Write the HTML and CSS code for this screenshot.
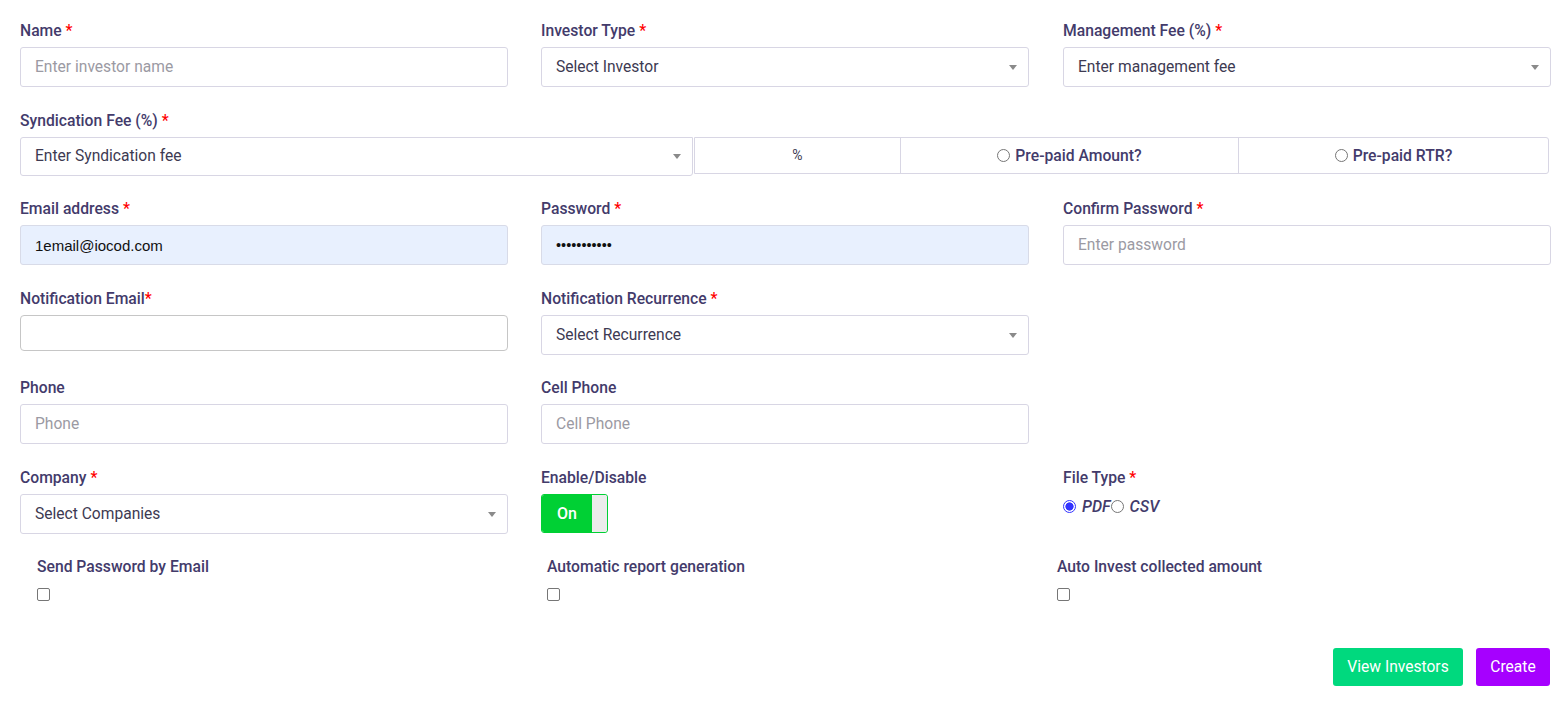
FILE: index.html
```html
<!DOCTYPE html>
<html>
<head>
<meta charset="utf-8">
<link rel="stylesheet" href="styles.css">
</head>
<body>
<form class="page">
  <div class="grid">
    <div class="field">
      <label class="lbl">Name <span class="req">*</span></label>
      <div class="ctl"><span class="ph">Enter investor name</span></div>
    </div>
    <div class="field">
      <label class="lbl">Investor Type <span class="req">*</span></label>
      <div class="ctl sel"><span class="val">Select Investor</span><span class="caret"></span></div>
    </div>
    <div class="field c3">
      <label class="lbl">Management Fee (%) <span class="req">*</span></label>
      <div class="ctl sel"><span class="val">Enter management fee</span><span class="caret"></span></div>
    </div>

    <div class="field span3">
      <label class="lbl">Syndication Fee (%) <span class="req">*</span></label>
      <div class="synd">
        <div class="ctl sel synd-sel"><span class="val">Enter Syndication fee</span><span class="caret"></span></div>
        <div class="group">
          <div class="cell pct">%</div>
          <div class="cell amt"><span class="radio"></span><span class="rtxt">Pre-paid Amount?</span></div>
          <div class="cell rtr"><span class="radio"></span><span class="rtxt">Pre-paid RTR?</span></div>
        </div>
      </div>
    </div>

    <div class="field">
      <label class="lbl">Email address <span class="req">*</span></label>
      <div class="ctl auto"><span class="atxt">1email@iocod.com</span></div>
    </div>
    <div class="field">
      <label class="lbl">Password <span class="req">*</span></label>
      <div class="ctl auto"><span class="dots">•••••••••••</span></div>
    </div>
    <div class="field c3">
      <label class="lbl">Confirm Password <span class="req">*</span></label>
      <div class="ctl"><span class="ph">Enter password</span></div>
    </div>

    <div class="field">
      <label class="lbl">Notification Email<span class="req">*</span></label>
      <div class="ctl plain"></div>
    </div>
    <div class="field">
      <label class="lbl">Notification Recurrence <span class="req">*</span></label>
      <div class="ctl sel"><span class="val">Select Recurrence</span><span class="caret"></span></div>
    </div>
    <div class="field c3"></div>

    <div class="field">
      <label class="lbl">Phone</label>
      <div class="ctl"><span class="ph">Phone</span></div>
    </div>
    <div class="field">
      <label class="lbl">Cell Phone</label>
      <div class="ctl"><span class="ph">Cell Phone</span></div>
    </div>
    <div class="field c3"></div>

    <div class="field">
      <label class="lbl">Company <span class="req">*</span></label>
      <div class="ctl sel"><span class="val">Select Companies</span><span class="caret"></span></div>
    </div>
    <div class="field">
      <label class="lbl">Enable/Disable</label>
      <div class="toggle"><span class="on">On</span><span class="knob"></span></div>
    </div>
    <div class="field c3">
      <label class="lbl">File Type <span class="req">*</span></label>
      <div class="ftype">
        <span class="radio checked"></span><span class="it">PDF</span><span class="radio"></span><span class="it csv">CSV</span>
      </div>
    </div>
  </div>

  <div class="checks">
    <div class="chk"><div class="lbl">Send Password by Email</div><span class="box"></span></div>
    <div class="chk"><div class="lbl">Automatic report generation</div><span class="box"></span></div>
    <div class="chk"><div class="lbl">Auto Invest collected amount</div><span class="box"></span></div>
  </div>

  <div class="actions">
    <button type="button" class="btn green">View Investors</button>
    <button type="button" class="btn purple">Create</button>
  </div>
</form>
</body>
</html>
```

FILE: styles.css
```css
* { box-sizing: border-box; }
body {
  margin: 0;
  background: #fff;
  font-family: Roboto, "Liberation Sans", Arial, sans-serif;
}
.page {
  padding: 20px 13px 0 20px;
}
.grid {
  display: grid;
  grid-template-columns: 488px 488px 489px;
  column-gap: 33px;
  row-gap: 22.6px;
}
.c3 { margin-left: 1px; }
.span3 { grid-column: 1 / 4; }
.field { display: flex; flex-direction: column; }
.lbl {
  display: block;
  font-size: 15.7px;
  font-weight: 500;
  line-height: 22px;
  color: #433b6b;
  margin-bottom: 5px;
  white-space: nowrap;
}
.req { color: #ff0000; }
.ctl {
  position: relative;
  height: 40px;
  border: 1px solid #d8d6e4;
  border-radius: 3px;
  display: flex;
  align-items: center;
  padding: 0 14px;
  font-size: 15.6px;
  background: #fff;
}
.ph { color: #9b9aa3; }
.val { color: #3d3a52; }
.sel { padding-right: 30px; }
.caret {
  position: absolute;
  right: 11px;
  top: 50%;
  margin-top: -2px;
  width: 0; height: 0;
  border-left: 4.5px solid transparent;
  border-right: 4.5px solid transparent;
  border-top: 5px solid #8a8a8a;
}
.auto { background: #e8f0fe; border-color: #d8dbe8; }
.atxt { font-family: "Liberation Sans", Arial, sans-serif; color: #111; font-size: 15px; }
.dots { font-family: "Liberation Sans", Arial, sans-serif; color: #111; font-size: 14.5px; }
.plain { height: 36px; border-color: #c6c6c6; border-radius: 4px; }

.synd { display: flex; align-items: flex-start; }
.synd-sel { width: 673px; height: 39px; border-radius: 3px 0 3px 3px; }
.group {
  display: flex;
  height: 37px;
  border: 1px solid #d8d6e4;
  border-radius: 0 3px 3px 0;
  margin-left: 1px;
  width: 855px;
}
.cell {
  display: flex;
  align-items: center;
  justify-content: center;
  font-size: 15.7px;
  height: 100%;
}
.pct { width: 206px; border-right: 1px solid #d8d6e4; color: #3d3a52; font-size: 14px; }
.amt { width: 338px; border-right: 1px solid #d8d6e4; }
.rtr { flex: 1; }
.rtxt { font-weight: 500; color: #433b6b; }
.radio {
  display: inline-block;
  width: 13px; height: 13px;
  border: 1px solid #767676;
  border-radius: 50%;
  margin-right: 5px;
  background: #fff;
  flex: none;
}
.radio.checked {
  border: 1px solid #3333ff;
  background: radial-gradient(circle, #3333ff 0 3.8px, #fff 4.4px);
}

.toggle {
  display: flex;
  width: 67px; height: 39px;
  border: 1px solid #00d034;
  border-radius: 3px;
  overflow: hidden;
}
.toggle .on {
  width: 50px;
  background: #00d034;
  color: #fff;
  font-weight: 500;
  font-size: 16px;
  display: flex; align-items: center; justify-content: center;
}
.toggle .knob { flex: 1; background: #ececec; border-radius: 2px; }

.ftype { display: flex; align-items: center; height: 26px; }
.ftype .radio { margin-right: 6px; }
.it { font-style: italic; font-weight: 500; font-size: 16px; color: #433b6b; }

.checks {
  display: grid;
  grid-template-columns: 510px 510px 510px;
  margin-top: 22px;
}
.chk { padding-left: 17px; }
.chk .lbl { margin-bottom: 10px; }
.box {
  display: block;
  width: 13px; height: 13px;
  border: 1px solid #767676;
  border-radius: 2px;
}
.actions {
  display: flex;
  justify-content: flex-end;
  gap: 13px;
  margin-top: 47px;
  margin-right: 1px;
}
.btn {
  height: 38px;
  border: none;
  border-radius: 3px;
  color: #fff;
  font-family: Roboto, "Liberation Sans", Arial, sans-serif;
  font-size: 15.6px;
  padding: 0;
}
.green { background: #00d97e; width: 130px; }
.purple { background: #a600ff; width: 74px; }
```
